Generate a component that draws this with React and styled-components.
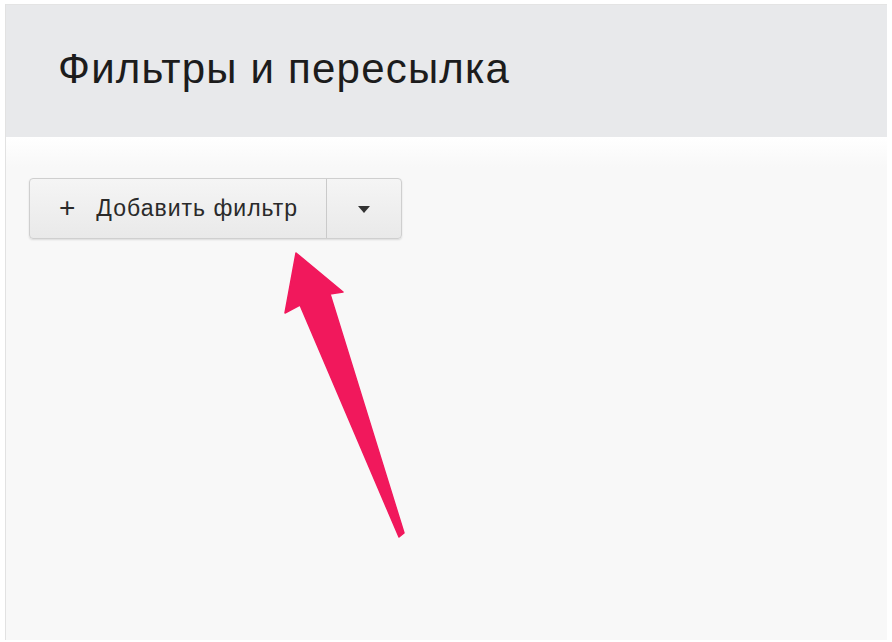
import React from 'react'
import styled, { createGlobalStyle } from 'styled-components'

const GlobalStyle = createGlobalStyle`
  html, body {
    margin: 0;
    padding: 0;
    background: #ffffff;
  }
  body {
    font-family: 'Liberation Sans', Arial, sans-serif;
  }
`

const Page = styled.div`
  width: 892px;
  height: 642px;
  box-sizing: border-box;
  padding: 4px 5px 2px 5px;
  background: #ffffff;
`

const Panel = styled.div`
  position: relative;
  height: 100%;
  display: flex;
  flex-direction: column;
  border-left: 1px solid #e2e2e2;
  background: #f8f8f8;
`

const Header = styled.div`
  height: 132px;
  flex: none;
  display: flex;
  align-items: center;
  padding: 0 0 0 52px;
  background: #e8e9eb;
  border-top: 1px solid #e4e4e4;
`

const Title = styled.h1`
  margin: 0 0 4px 0;
  font-family: 'Liberation Sans', Arial, sans-serif;
  font-size: 42px;
  font-weight: normal;
  color: #1c1c1c;
  letter-spacing: 1.2px;
`

const Body = styled.div`
  flex: 1;
  padding: 41px 0 0 23px;
  background: linear-gradient(#ffffff 0px, #f8f8f8 30px);
`

const SplitButton = styled.div`
  display: inline-flex;
  height: 61px;
  box-sizing: border-box;
  border: 1px solid #cfcfcf;
  border-radius: 4px;
  background: linear-gradient(#f5f5f5, #e9e9e9);
  box-shadow: 0 1px 2px rgba(0, 0, 0, 0.12);
`

const Part = styled.div`
  display: flex;
  align-items: center;
  justify-content: ${p => (p.center ? 'center' : 'flex-start')};
  width: ${p => p.width}px;
  box-sizing: border-box;
  padding-left: ${p => (p.center ? 0 : 29)}px;
  border-left: ${p => (p.divided ? '1px solid #cacaca' : 'none')};
  color: #2a2a2a;
  font-family: 'Liberation Sans', Arial, sans-serif;
  font-size: 23px;
  letter-spacing: 1px;
`

const Plus = styled.span`
  font-size: 28px;
  margin-right: 20px;
  margin-top: -2px;
`

const Caret = styled.span`
  width: 0;
  height: 0;
  border-left: 6px solid transparent;
  border-right: 6px solid transparent;
  border-top: 7px solid #333;
  margin-top: 2px;
`

const Arrow = styled.svg`
  position: absolute;
  left: 0;
  top: 0;
  pointer-events: none;
`

export default function App () {
  return (
    <Page>
      <GlobalStyle />
      <Panel>
        <Header>
          <Title>Фильтры и пересылка</Title>
        </Header>
        <Body>
          <SplitButton>
            <Part width={296}>
              <Plus>+</Plus>
              Добавить фильтр
            </Part>
            <Part width={75} center divided>
              <Caret />
            </Part>
          </SplitButton>
        </Body>
        <Arrow width='880' height='640' viewBox='6 4 880 640'>
          <polygon
            points='296,253 343,292 330,294 404,533 399,537 300,305 285,313'
            fill='#f1185c'
            stroke='#f1185c'
            strokeWidth='1.5'
            strokeLinejoin='round'
          />
        </Arrow>
      </Panel>
    </Page>
  )
}
